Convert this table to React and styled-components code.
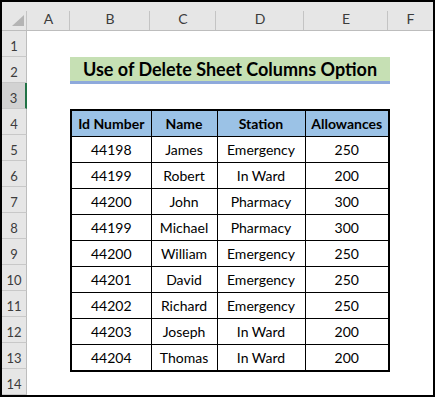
import React from "react";
import styled, { createGlobalStyle } from "styled-components";

const GlobalStyle = createGlobalStyle`
  html, body { margin: 0; padding: 0; background: #fff; }
  body { font-family: Lato, "Open Sans", sans-serif; }
`;

const COLS = [
  { name: "A", width: 43 },
  { name: "B", width: 80 },
  { name: "C", width: 66 },
  { name: "D", width: 88 },
  { name: "E", width: 84 },
  { name: "F", width: 45 },
];

const ROWS = [
  ["44198", "James", "Emergency", "250"],
  ["44199", "Robert", "In Ward", "200"],
  ["44200", "John", "Pharmacy", "300"],
  ["44199", "Michael", "Pharmacy", "300"],
  ["44200", "William", "Emergency", "250"],
  ["44201", "David", "Emergency", "250"],
  ["44202", "Richard", "Emergency", "250"],
  ["44203", "Joseph", "In Ward", "200"],
  ["44204", "Thomas", "In Ward", "200"],
];

const Frame = styled.div`
  width: 435px;
  height: 397px;
  box-sizing: border-box;
  border: 2px solid #000;
  background: #fff;
  overflow: hidden;
`;

const HeaderRow = styled.div`
  display: flex;
  height: 28px;
  background: #e6e6e6;
  border-bottom: 1px solid #bdbdbd;
`;

const Corner = styled.div`
  width: 25px;
  flex: none;
  display: flex;
  align-items: flex-end;
  justify-content: flex-end;
  padding: 0 3px 4px 0;
  box-sizing: border-box;
  background: linear-gradient(#c4c4c4, #c4c4c4) right bottom / 1px 19px no-repeat, #e6e6e6;
`;

const ColHead = styled.div`
  width: ${(p) => p.$w}px;
  flex: none;
  display: flex;
  align-items: center;
  justify-content: center;
  padding-top: 4px;
  box-sizing: border-box;
  font-family: Lato, "Open Sans", sans-serif;
  font-size: 14px;
  color: #3c3c3c;
  background: ${(p) =>
    p.$last
      ? "#e6e6e6"
      : "linear-gradient(#c4c4c4, #c4c4c4) right bottom / 1px 19px no-repeat, #e6e6e6"};
`;

const Body = styled.div`
  display: flex;
`;

const RowHeads = styled.div`
  width: 25px;
  flex: none;
  display: flex;
  flex-direction: column;
`;

const RowHead = styled.div`
  height: 26px;
  box-sizing: border-box;
  display: flex;
  align-items: center;
  justify-content: center;
  padding-top: 5px;
  font-family: Lato, "Open Sans", sans-serif;
  font-size: 13px;
  color: #3c3c3c;
  background: ${(p) => (p.$active ? "#d2d2d2" : "#e6e6e6")};
  border-bottom: 1px solid #c8c8c8;
  border-right: ${(p) => (p.$active ? "2px solid #217346" : "1px solid #bdbdbd")};
`;

const Sheet = styled.div`
  flex: 1;
  padding: 26px 45px 0 43px;
`;

const Title = styled.div`
  height: 24px;
  border-bottom: 3px solid #8ea9db;
  background: #c6e0b4;
  display: flex;
  align-items: center;
  justify-content: center;
  font-family: Lato, "Open Sans", sans-serif;
  font-weight: 700;
  font-size: 18px;
  color: #000;
`;

const Table = styled.table`
  margin-top: 25px;
  border-collapse: collapse;
  border: 2px solid #000;
  table-layout: fixed;
  width: 318px;
`;

const Th = styled.th`
  height: 25px;
  padding: 0;
  border: 1px solid #000;
  background: #9bc2e6;
  font-family: Lato, "Open Sans", sans-serif;
  font-weight: 700;
  font-size: 14px;
  text-align: center;
  vertical-align: middle;
  color: #000;
`;

const Td = styled.td`
  height: 25px;
  padding: 0;
  border: 1px solid #000;
  font-family: Lato, "Open Sans", sans-serif;
  font-size: 14px;
  text-align: center;
  vertical-align: middle;
  color: #000;
`;

export default function App() {
  return (
    <>
      <GlobalStyle />
      <Frame>
        <HeaderRow>
          <Corner>
            <svg width="12" height="11" viewBox="0 0 12 11">
              <polygon points="12,0 12,11 0,11" fill="#b4b4b4" />
            </svg>
          </Corner>
          {COLS.map((c, i) => (
            <ColHead key={c.name} $w={c.width} $last={i === COLS.length - 1}>
              {c.name}
            </ColHead>
          ))}
        </HeaderRow>
        <Body>
          <RowHeads>
            {Array.from({ length: 14 }, (_, i) => (
              <RowHead key={i} $active={i === 2}>
                {i + 1}
              </RowHead>
            ))}
          </RowHeads>
          <Sheet>
            <Title>Use of Delete Sheet Columns Option</Title>
            <Table>
              <colgroup>
                <col style={{ width: 80 }} />
                <col style={{ width: 66 }} />
                <col style={{ width: 88 }} />
                <col style={{ width: 84 }} />
              </colgroup>
              <thead>
                <tr>
                  <Th>Id Number</Th>
                  <Th>Name</Th>
                  <Th>Station</Th>
                  <Th>Allowances</Th>
                </tr>
              </thead>
              <tbody>
                {ROWS.map((r, i) => (
                  <tr key={i}>
                    {r.map((v, j) => (
                      <Td key={j}>{v}</Td>
                    ))}
                  </tr>
                ))}
              </tbody>
            </Table>
          </Sheet>
        </Body>
      </Frame>
    </>
  );
}
